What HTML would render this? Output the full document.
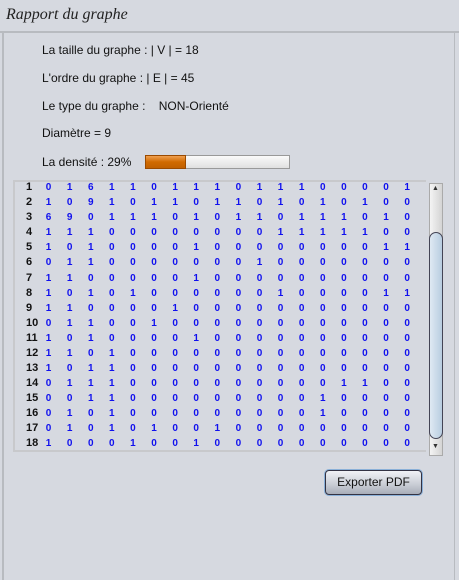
<!DOCTYPE html><html><head><meta charset="utf-8"><style>
body{margin:0;width:459px;height:580px;background:#d6d9e0;font-family:"Liberation Sans",sans-serif;position:relative;overflow:hidden}
.a{position:absolute}
.t{position:absolute;font-size:12px;color:#111;left:42px}
.r{position:absolute;left:26px;height:15px;display:flex;font-size:10px;font-weight:bold;line-height:15px}
.r b{width:12px;text-align:left;color:#111;font-size:11px}
.r span{width:21.1px;text-align:center;color:#1010ee}
</style></head><body>
<div class="a" style="left:6px;top:6px;font-family:'URW Chancery L','Liberation Serif',cursive;font-style:italic;font-size:16px;color:#222">Rapport du graphe</div>
<div class="a" style="left:0;top:31px;width:459px;height:2px;background:#b8bbc0"></div>
<div class="a" style="left:2px;top:33px;width:2px;height:547px;background:#b8bbc0"></div>
<div class="a" style="left:454px;top:33px;width:1px;height:547px;background:#b8bbc0"></div>
<div class="t" style="top:43px">La taille du graphe : | V | = 18</div>
<div class="t" style="top:71px">L'ordre du graphe : | E | = 45</div>
<div class="t" style="top:99px">Le type du graphe : &nbsp;&nbsp;&nbsp;NON-Orienté</div>
<div class="t" style="top:126px">Diamètre = 9</div>
<div class="t" style="top:155px">La densité : 29%</div>
<div class="a" style="left:145px;top:155px;width:145px;height:14px;border:1px solid #999;background:linear-gradient(#fafafa,#e0e0e0);box-sizing:border-box"></div>
<div class="a" style="left:145px;top:155px;width:41px;height:14px;border:1px solid #9a4a00;background:linear-gradient(#f0a050,#d06a00 50%,#c06000);box-sizing:border-box"></div>
<div class="a" style="left:13px;top:180px;width:413px;height:272px;border:2px solid #c8c9cc;border-right:none;box-sizing:border-box"></div>
<div class="a" style="left:429px;top:183px;width:14px;height:273px;background:linear-gradient(90deg,#f4f4f4,#d4d4d4);border:1px solid #aaa;box-sizing:border-box"></div>
<div class="a" style="left:432px;top:185px;font-size:7px;color:#333">▲</div>
<div class="a" style="left:432px;top:443px;font-size:7px;color:#333">▼</div>
<div class="a" style="left:429px;top:232px;width:14px;height:207px;border:1px solid #445;border-radius:7px;background:linear-gradient(90deg,#dfe9f3,#b8cde0);box-sizing:border-box"></div>
<div class="r" style="top:180px"><b>1</b><span>0</span><span>1</span><span>6</span><span>1</span><span>1</span><span>0</span><span>1</span><span>1</span><span>1</span><span>0</span><span>1</span><span>1</span><span>1</span><span>0</span><span>0</span><span>0</span><span>0</span><span>1</span></div>
<div class="r" style="top:195px"><b>2</b><span>1</span><span>0</span><span>9</span><span>1</span><span>0</span><span>1</span><span>1</span><span>0</span><span>1</span><span>1</span><span>0</span><span>1</span><span>0</span><span>1</span><span>0</span><span>1</span><span>0</span><span>0</span></div>
<div class="r" style="top:210px"><b>3</b><span>6</span><span>9</span><span>0</span><span>1</span><span>1</span><span>1</span><span>0</span><span>1</span><span>0</span><span>1</span><span>1</span><span>0</span><span>1</span><span>1</span><span>1</span><span>0</span><span>1</span><span>0</span></div>
<div class="r" style="top:225px"><b>4</b><span>1</span><span>1</span><span>1</span><span>0</span><span>0</span><span>0</span><span>0</span><span>0</span><span>0</span><span>0</span><span>0</span><span>1</span><span>1</span><span>1</span><span>1</span><span>1</span><span>0</span><span>0</span></div>
<div class="r" style="top:240px"><b>5</b><span>1</span><span>0</span><span>1</span><span>0</span><span>0</span><span>0</span><span>0</span><span>1</span><span>0</span><span>0</span><span>0</span><span>0</span><span>0</span><span>0</span><span>0</span><span>0</span><span>1</span><span>1</span></div>
<div class="r" style="top:255px"><b>6</b><span>0</span><span>1</span><span>1</span><span>0</span><span>0</span><span>0</span><span>0</span><span>0</span><span>0</span><span>0</span><span>1</span><span>0</span><span>0</span><span>0</span><span>0</span><span>0</span><span>0</span><span>0</span></div>
<div class="r" style="top:271px"><b>7</b><span>1</span><span>1</span><span>0</span><span>0</span><span>0</span><span>0</span><span>0</span><span>1</span><span>0</span><span>0</span><span>0</span><span>0</span><span>0</span><span>0</span><span>0</span><span>0</span><span>0</span><span>0</span></div>
<div class="r" style="top:286px"><b>8</b><span>1</span><span>0</span><span>1</span><span>0</span><span>1</span><span>0</span><span>0</span><span>0</span><span>0</span><span>0</span><span>0</span><span>1</span><span>0</span><span>0</span><span>0</span><span>0</span><span>1</span><span>1</span></div>
<div class="r" style="top:301px"><b>9</b><span>1</span><span>1</span><span>0</span><span>0</span><span>0</span><span>0</span><span>1</span><span>0</span><span>0</span><span>0</span><span>0</span><span>0</span><span>0</span><span>0</span><span>0</span><span>0</span><span>0</span><span>0</span></div>
<div class="r" style="top:316px"><b>10</b><span>0</span><span>1</span><span>1</span><span>0</span><span>0</span><span>1</span><span>0</span><span>0</span><span>0</span><span>0</span><span>0</span><span>0</span><span>0</span><span>0</span><span>0</span><span>0</span><span>0</span><span>0</span></div>
<div class="r" style="top:331px"><b>11</b><span>1</span><span>0</span><span>1</span><span>0</span><span>0</span><span>0</span><span>0</span><span>1</span><span>0</span><span>0</span><span>0</span><span>0</span><span>0</span><span>0</span><span>0</span><span>0</span><span>0</span><span>0</span></div>
<div class="r" style="top:346px"><b>12</b><span>1</span><span>1</span><span>0</span><span>1</span><span>0</span><span>0</span><span>0</span><span>0</span><span>0</span><span>0</span><span>0</span><span>0</span><span>0</span><span>0</span><span>0</span><span>0</span><span>0</span><span>0</span></div>
<div class="r" style="top:361px"><b>13</b><span>1</span><span>0</span><span>1</span><span>1</span><span>0</span><span>0</span><span>0</span><span>0</span><span>0</span><span>0</span><span>0</span><span>0</span><span>0</span><span>0</span><span>0</span><span>0</span><span>0</span><span>0</span></div>
<div class="r" style="top:376px"><b>14</b><span>0</span><span>1</span><span>1</span><span>1</span><span>0</span><span>0</span><span>0</span><span>0</span><span>0</span><span>0</span><span>0</span><span>0</span><span>0</span><span>0</span><span>1</span><span>1</span><span>0</span><span>0</span></div>
<div class="r" style="top:391px"><b>15</b><span>0</span><span>0</span><span>1</span><span>1</span><span>0</span><span>0</span><span>0</span><span>0</span><span>0</span><span>0</span><span>0</span><span>0</span><span>0</span><span>1</span><span>0</span><span>0</span><span>0</span><span>0</span></div>
<div class="r" style="top:406px"><b>16</b><span>0</span><span>1</span><span>0</span><span>1</span><span>0</span><span>0</span><span>0</span><span>0</span><span>0</span><span>0</span><span>0</span><span>0</span><span>0</span><span>1</span><span>0</span><span>0</span><span>0</span><span>0</span></div>
<div class="r" style="top:421px"><b>17</b><span>0</span><span>1</span><span>0</span><span>1</span><span>0</span><span>1</span><span>0</span><span>0</span><span>1</span><span>0</span><span>0</span><span>0</span><span>0</span><span>0</span><span>0</span><span>0</span><span>0</span><span>0</span></div>
<div class="r" style="top:436px"><b>18</b><span>1</span><span>0</span><span>0</span><span>0</span><span>1</span><span>0</span><span>0</span><span>1</span><span>0</span><span>0</span><span>0</span><span>0</span><span>0</span><span>0</span><span>0</span><span>0</span><span>0</span><span>0</span></div>
<div class="a" style="left:325px;top:470px;width:97px;height:25px;border:1px solid #334;border-radius:4px;box-shadow:0 0 0 1px #8ab0d8;background:linear-gradient(#f0f2f6,#c8ccd4 60%,#a8adb8);box-sizing:border-box;font-size:12px;color:#111;text-align:center;line-height:23px">Exporter PDF</div>
</body></html>
